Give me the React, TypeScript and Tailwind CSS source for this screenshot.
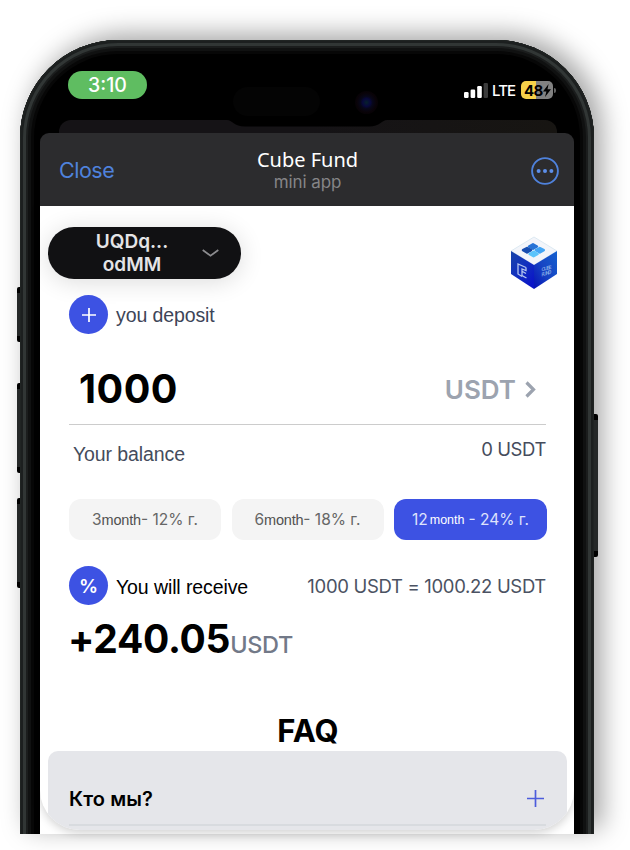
import React from "react";

const inter = "font-['Inter','Liberation_Sans',sans-serif]";

function PhoneShell() {
  return (
    <>
      <div className="absolute left-0 top-0 h-[794px] w-[574px] rounded-t-[98px] shadow-[8px_-6px_26px_rgba(0,0,0,0.36)]" />
      <div className="absolute left-[-3px] top-[247px] h-[55px] w-[5px] rounded-l-[2px] border-y-[6px] border-black bg-[#252828]" />
      <div className="absolute left-[-3px] top-[343px] h-[90px] w-[5px] rounded-l-[2px] border-y-[6px] border-black bg-[#252828]" />
      <div className="absolute left-[-3px] top-[458px] h-[90px] w-[5px] rounded-l-[2px] border-y-[6px] border-black bg-[#252828]" />
      <div className="absolute right-[-4px] top-[374px] h-[143px] w-[5px] rounded-r-[2px] border-y-[6px] border-black bg-[#252828]" />
      <div className="absolute left-0 top-0 h-[794px] w-[574px] overflow-hidden">
        <div className="h-[900px] w-[574px] rounded-t-[98px] bg-black shadow-[inset_0_0_0_1px_#202423,inset_0_0_0_3px_#1c1f1f,inset_0_0_0_6px_#313635,inset_0_0_0_8px_#1b1d1d,inset_0_0_0_11px_#101111,inset_0_0_0_14px_#070707]" />
      </div>
      <div className="absolute left-[213px] top-[47px] h-[29px] w-[87px] rounded-full bg-[#040404]" />
      <div className="absolute left-[335px] top-[51px] h-[23px] w-[23px] rounded-full bg-[radial-gradient(circle,#06212b_0%,#08083c_24%,#070719_38%,#090308_60%,#000_100%)]" />
    </>
  );
}

function StatusBar() {
  return (
    <div className="relative flex h-[80px] items-start justify-between pl-[48px] pr-[38px] pt-[31px]">
      <div className="flex h-[28px] w-[79px] items-center justify-center rounded-full bg-[#5fbd61] pt-[2px] text-[19.5px] font-medium leading-none text-white">
        3:10
      </div>
      <div className="mt-[10px] flex h-[18px] items-center text-white">
        <svg width="24" height="16" viewBox="0 0 24 16" fill="white">
          <rect x="0" y="10" width="4.6" height="6" rx="1.2" />
          <rect x="6.6" y="7.5" width="4.6" height="8.5" rx="1.2" />
          <rect x="13.2" y="4" width="4.6" height="12" rx="1.2" />
          <rect x="19.6" y="1" width="4.4" height="15" rx="1.2" fill="#3b3b3b" />
        </svg>
        <span className="ml-[4px] w-[24px] whitespace-nowrap text-[15px] font-medium leading-none tracking-[-0.9px]">LTE</span>
        <div className="ml-[5px] flex h-[18px] w-[32px] items-center rounded-[5px] bg-[linear-gradient(90deg,#f7d24a_0_15px,#818181_15px)] pl-[3px] text-black">
          <span className="text-[15px] font-bold leading-none tracking-[-0.6px]">48</span>
          <svg width="8" height="13" viewBox="0 0 8 13">
            <path d="M5.600 0 0 7.400h3.400L2 13l6-7.800H4.500z" />
          </svg>
        </div>
        <div className="ml-[1px] h-[5px] w-[2px] rounded-r-full bg-[#636363]" />
      </div>
    </div>
  );
}

function SheetHeader() {
  return (
    <>
      <div className="relative ml-[39px] h-[13px] w-[498px] rounded-t-[12px] bg-[linear-gradient(90deg,#151316,#151316_50%,#171512)]">
        <svg className="ml-[168px] block" width="160" height="7" viewBox="0 0 160 7">
          <path d="M0 0h160c-5 0-7 6.500-18 6.500H18C7 6.500 5 0 0 0z" />
        </svg>
      </div>
      <div className="relative ml-[20px] flex h-[73px] w-[534px] items-center justify-between rounded-t-[9px] bg-[#2c2c2e] pl-[19px] pr-[15px]">
        <span className="w-[60px] pt-[2px] text-[21.5px] leading-none tracking-[-0.5px] text-[#4f82dc]">Close</span>
        <div className="-ml-[3px] flex flex-col items-center pt-[1px]">
          <span className="h-[24px] whitespace-nowrap font-['Noto_Sans','Open_Sans',sans-serif] text-[20px] leading-[24px] text-white">Cube Fund</span>
          <span className="h-[20px] whitespace-nowrap text-[17px] leading-[20px] tracking-[-0.1px] text-[#858587]">mini app</span>
        </div>
        <div className="flex w-[60px] justify-end pt-[3px]">
          <svg width="28" height="28" viewBox="0 0 28 28" fill="none" stroke="#4f82dc" strokeWidth="1.9">
            <circle cx="14" cy="14" r="12.9" />
            <g fill="#5d8fea" stroke="none">
              <circle cx="7.6" cy="14" r="2" />
              <circle cx="14" cy="14" r="2" />
              <circle cx="20.4" cy="14" r="2" />
            </g>
          </svg>
        </div>
      </div>
    </>
  );
}

function CubeLogo() {
  return (
    <svg width="48" height="54" viewBox="0 0 48 54">
      <defs>
        <linearGradient id="cubeLeft" x1="0" y1="0" x2="0.7" y2="1">
          <stop stopColor="#1744a8" />
          <stop offset="0.5" stopColor="#1232bd" />
          <stop offset="1" stopColor="#0b16c8" />
        </linearGradient>
        <linearGradient id="cubeRight" x1="1" y1="0" x2="0" y2="1">
          <stop stopColor="#1460cf" />
          <stop offset="0.5" stopColor="#1746c4" />
          <stop offset="1" stopColor="#0712b5" />
        </linearGradient>
      </defs>
      <path d="M24 1 47 15 24 29 1 15z" fill="#f3f5fa" stroke="#dce9f2" />
      <path d="M1 15 24 29v24L1 38z" fill="url(#cubeLeft)" />
      <path d="M47 15 24 29v24l23-15z" fill="url(#cubeRight)" />
      <g strokeWidth="2.500" strokeLinejoin="round">
        <path d="m23 8.300 4 2.200-4 2.200-4-2.200z" fill="#2873d6" stroke="#2873d6" />
        <path d="m17 12 4 2.200-4 2.200-4-2.200z" fill="#174db0" stroke="#174db0" />
        <path d="m29.800 12 4 2.200-4 2.200-4-2.200z" fill="#43a5f5" stroke="#43a5f5" />
        <path d="m23.600 15.800 4 2.200-4 2.200-4-2.200z" fill="#5bc4fb" stroke="#5bc4fb" />
      </g>
      <path d="M16 31.500 8 28v10l4 2.500M16 31.500v3l-4-1.500v6.500l4.500 2.500M12.500 35.500l3.500 2" fill="none" stroke="#b3c4ee" strokeWidth="1.300" />
      <g fill="#86a9e6" fontSize="5" fontWeight="600" transform="matrix(1 -.3 0 1 31.500 35.500)">
        <text x="0" y="0" textLength="10">CUBE</text>
        <text x="0" y="5" textLength="10">FUND</text>
      </g>
    </svg>
  );
}

function Deposit() {
  return (
    <div className="pl-[29px] pr-[28px]">
      <div className="flex h-[39px] items-center">
        <div className="flex size-[39px] items-center justify-center rounded-full bg-[#3d52e3]">
          <svg width="14" height="14" viewBox="0 0 14 14" stroke="white" strokeWidth="1.7">
            <path d="M7 0v14M0 7h14" />
          </svg>
        </div>
        <span className="ml-[8px] w-[117px] bg-white font-['Liberation_Sans',sans-serif] text-[19.500px] leading-[26px] tracking-[-0.1px] text-[#3d4558]">you deposit</span>
      </div>
      <div className="mt-[31px] flex h-[60px] items-center justify-between border-b border-[#cccccc] pl-[10px] pr-[10px]">
        <span className="pb-[11px] text-[39.500px] font-bold leading-[48px] tracking-[0.5px] text-black">1000</span>
        <span className="flex items-center pb-[10px] text-[26px] font-semibold leading-[48px] text-[#9ca3af]">
          USDT
          <svg className="ml-[9px]" width="11" height="17" viewBox="0 0 11 17" fill="none" stroke="#9ca3af" strokeWidth="3.200">
            <path d="m1.500 1.500 7 7-7 7" />
          </svg>
        </span>
      </div>
      <div className="flex justify-between pl-[4px] pt-[12px] text-[19px] leading-[24px] text-[#454c5c]">
        <span className="pt-[5px] font-['Liberation_Sans',sans-serif] text-[19.500px] tracking-[-0.1px]">Your balance</span>
        <span className="text-[18.5px] tracking-[-0.4px]">0 USDT</span>
      </div>
    </div>
  );
}

function Terms() {
  return (
    <div className="mt-[33px] flex justify-between pl-[29px] pr-[27px] text-[15.5px] leading-none text-[#666]">
      <div className="flex h-[41px] w-[152px] items-center justify-center whitespace-nowrap rounded-[12px] bg-[#f4f4f4]">
        <span>3</span>
        <span className="pt-[2px] font-['Liberation_Sans',sans-serif] text-[14.500px] tracking-[-0.2px] text-[#505050]">month</span>
        <span>- 12% г.</span>
      </div>
      <div className="flex h-[41px] w-[152px] items-center justify-center whitespace-nowrap rounded-[12px] bg-[#f4f4f4]">
        <span>6</span>
        <span className="pt-[2px] font-['Liberation_Sans',sans-serif] text-[14.500px] tracking-[-0.2px] text-[#505050]">month</span>
        <span>- 18% г.</span>
      </div>
      <div className="flex h-[41px] w-[153px] items-center justify-center whitespace-nowrap rounded-[12px] bg-[#3d52e3] text-[#dfe3fc]">
        <span>12</span>
        <span className="mx-[2px] pt-[2px] font-['Liberation_Sans',sans-serif] text-[12.500px] text-white">month</span>
        <span className="ml-[2px]">- 24% г.</span>
      </div>
    </div>
  );
}

function Receive() {
  return (
    <div className="mt-[26px] pl-[29px] pr-[28px]">
      <div className="flex h-[39px] items-center">
        <div className="flex size-[39px] items-center justify-center rounded-full bg-[#3d52e3] pt-[2px] text-[19px] font-semibold leading-none text-white">%</div>
        <span className="ml-[8px] pt-[2px] font-['Liberation_Sans',sans-serif] text-[19.500px] leading-[26px] tracking-[-0.1px] text-black">You will receive</span>
        <span className="ml-auto whitespace-nowrap text-[18.500px] leading-[24px] tracking-[-0.32px] text-[#4b5262]">1000 USDT = 1000.22 USDT</span>
      </div>
      <div className="mt-[9px] flex h-[50px] items-baseline whitespace-nowrap leading-[50px]">
        <span className="-ml-px text-[39px] font-bold tracking-[-0.3px] text-black">+240.05</span>
        <span className="text-[23.500px] font-medium tracking-[-0.3px] text-[#727988]">USDT</span>
      </div>
    </div>
  );
}

function Faq() {
  return (
    <>
      <div className="mt-[46px] h-[41px] pl-[2px] text-center text-[31px] font-bold leading-[41px] text-black">FAQ</div>
      <div className="ml-[8px] h-[79px] w-[519px] rounded-t-[10px] bg-[#e5e6ea] px-[21px]">
        <div className="flex h-[73px] items-end justify-between pb-[11px]">
          <span className="text-[20px] font-semibold leading-[28px] tracking-[0.1px] text-black">Кто мы?</span>
          <svg className="mb-[6px] mr-[2px]" width="17" height="17" viewBox="0 0 17 17" stroke="#4c5cdc" strokeWidth="1.700">
            <path d="M8.500 0v17M0 8.500h17" />
          </svg>
        </div>
        <div className="h-[2px] bg-[#d8dbdf]" />
      </div>
    </>
  );
}

export default function App() {
  return (
    <div className={`h-[850px] w-[630px] overflow-hidden bg-white pl-[20px] pt-[40px] antialiased ${inter}`}>
      <div className="relative h-[794px] w-[574px]">
        <PhoneShell />
        <StatusBar />
        <SheetHeader />
        <div className="relative ml-[20px] h-[628px] w-[534px] bg-white">
          <div className="h-[624px] w-[534px] overflow-hidden rounded-b-[40px] bg-white shadow-[0_3px_10px_rgba(0,0,0,0.18)]">
            <div className="flex h-[89px] items-start justify-between pl-[8px] pr-[16px] pt-[21px]">
              <div className="flex h-[52px] w-[193px] items-center rounded-full bg-[#111113] pl-[36px] pr-[22px] shadow-[0_3px_25px_rgba(0,0,0,0.14)]">
                <div className="w-[96px] text-center text-[19px] font-semibold leading-[23px] text-[#e4e4e6]">
                  UQDq...
                  <br />
                  odMM
                </div>
                <svg className="ml-auto" width="17" height="8" viewBox="0 0 17 8" fill="none" stroke="#8b8b8e" strokeWidth="1.700">
                  <path d="m.7 1 7.800 5.800L16.300 1" />
                </svg>
              </div>
              <div className="mt-[9px]">
                <CubeLogo />
              </div>
            </div>
            <Deposit />
            <Terms />
            <Receive />
            <Faq />
          </div>
        </div>
      </div>
    </div>
  );
}
